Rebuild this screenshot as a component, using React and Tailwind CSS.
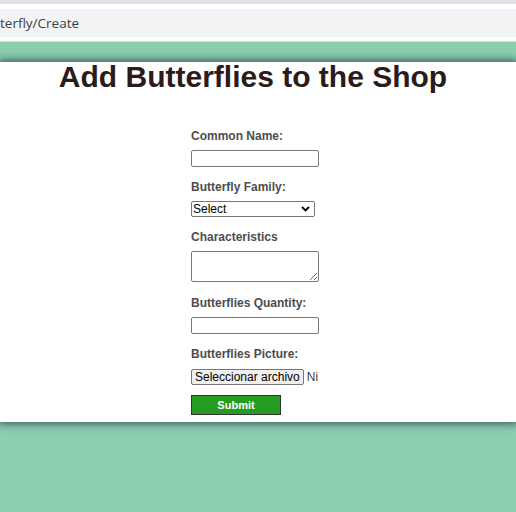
import React from 'react';

export default function App() {
  const labelCls = "block text-[12px] leading-[14px] font-bold text-[#4d4d4d] mb-[7px]";
  const boxCls = "block bg-white border border-[#767676] rounded-[2px]";

  return (
    <div className="min-h-[512px] bg-[#89cfb0] font-['Liberation_Sans',Arial,sans-serif]">
      {/* browser chrome */}
      <div className="h-[4px] bg-[#dee1e6]" />
      <div className="bg-white pt-[5px] pb-[4px]">
        <div className="h-[28px] bg-[#f1f3f4] flex items-center overflow-hidden">
          <span className="text-[13.5px] text-[#3c4043] font-['Open_Sans',sans-serif] whitespace-nowrap">terfly/Create</span>
        </div>
      </div>
      <div className="h-px bg-[#dadce0]" />

      <div className="pt-[20px]">
        <div className="bg-white shadow-[0_0_8px_2px_rgba(40,50,70,0.75)] pb-[7px]">
          <h1 className="text-[30px] leading-[30px] font-bold text-[#2b1b1b] text-center pr-[10px]">
            Add Butterflies to the Shop
          </h1>

          <form className="w-[134px] mx-auto mt-[37px]" onSubmit={(e) => e.preventDefault()}>
            <div>
              <label className={labelCls}>Common Name:</label>
              <input type="text" className={`${boxCls} w-[128px] h-[17px]`} />
            </div>

            <div className="mt-[13px]">
              <label className={labelCls}>Butterfly Family:</label>
              <div className="relative w-[124px] h-[16px]">
                <select className={`${boxCls} appearance-none w-[124px] h-[16px] text-[12px] leading-[14px] text-black pl-[1px] py-0`}>
                  <option>Select</option>
                </select>
                <svg className="absolute right-[5px] top-[5px] pointer-events-none" width="9" height="6" viewBox="0 0 9 6">
                  <polyline points="1,1 4.5,4.5 8,1" fill="none" stroke="#000" strokeWidth="1.8" />
                </svg>
              </div>
            </div>

            <div className="mt-[13px]">
              <label className={labelCls}>Characteristics</label>
              <textarea className={`${boxCls} w-[128px] h-[31px]`} />
            </div>

            <div className="mt-[14px]">
              <label className={labelCls}>Butterflies Quantity:</label>
              <input type="text" className={`${boxCls} w-[128px] h-[17px]`} />
            </div>

            <div className="mt-[13px]">
              <label className={labelCls}>Butterflies Picture:</label>
              <div className="w-[128px] whitespace-nowrap flex items-center">
                <span className="inline-flex items-center justify-center h-[16px] px-[3px] bg-[#efefef] border border-[#767676] rounded-[2px] text-[12px] text-black shrink-0">
                  Seleccionar archivo
                </span>
                <span className="ml-[3px] text-[12px] text-[#4a3f3a]">Ni</span>
              </div>
            </div>

            <button
              type="submit"
              className="mt-[9px] w-[90px] h-[20px] bg-[#259b22] border border-[#333] text-white text-[11px] font-bold flex items-center justify-center"
            >
              Submit
            </button>
          </form>
        </div>
      </div>
    </div>
  );
}
